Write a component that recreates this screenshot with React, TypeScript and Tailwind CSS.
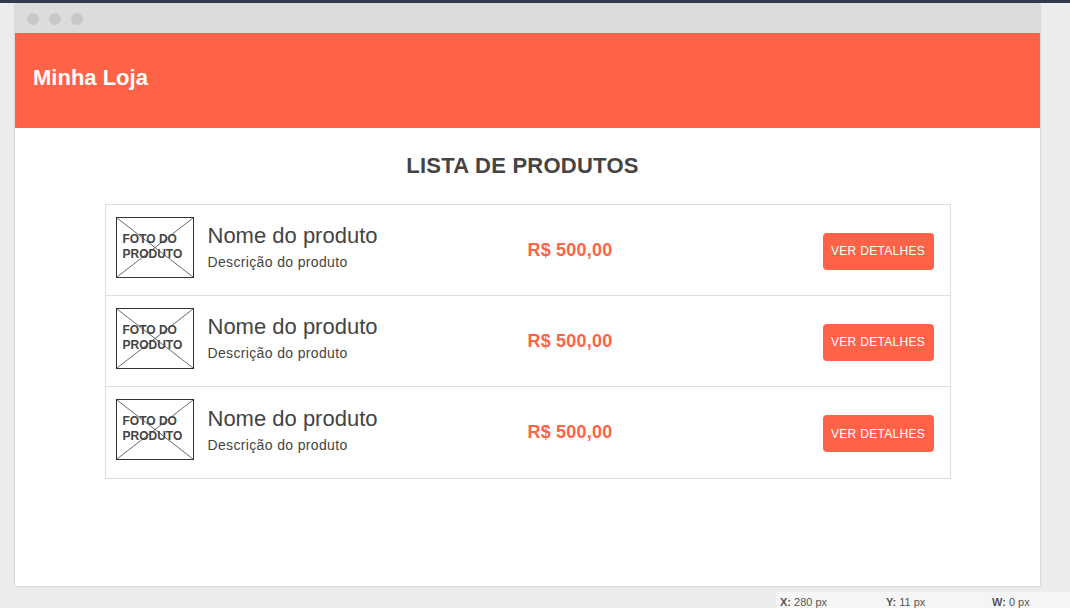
const products = [1, 2, 3].map((id) => ({
    id,
    name: 'Nome do produto',
    description: 'Descrição do produto',
    price: 'R$ 500,00',
}))

function PhotoPlaceholder() {
    return (
        <div className="relative h-[61px] w-[78px] shrink-0 border border-[#333]">
            <svg className="absolute inset-0 h-full w-full" viewBox="0 0 76 59" preserveAspectRatio="none">
                <line x1="0" y1="0" x2="76" y2="59" stroke="#444" strokeWidth="0.8" />
                <line x1="76" y1="0" x2="0" y2="59" stroke="#444" strokeWidth="0.8" />
            </svg>
            <div className="relative pl-[6px] pt-[14px] text-[12px] font-bold uppercase leading-[15px] text-[#444]">
                Foto do
                <br />
                Produto
            </div>
        </div>
    )
}

function ProductRow({ name, description, price, last }: { name: string; description: string; price: string; last: boolean }) {
    return (
        <div className={`flex h-[91px] items-center pl-[10px] pr-[16px] ${last ? '' : 'border-b border-[#ddd]'}`}>
            <div className="-mt-[6px]">
                <PhotoPlaceholder />
            </div>
            <div className="ml-[14px] w-[320px] -mt-[3px]">
                <div className="-mt-[1px] text-[22px] leading-[26px] text-[#444]">{name}</div>
                <div className="mt-[3px] text-[14px] tracking-[0.35px] text-[#444]">{description}</div>
            </div>
            <div className="text-[18px] font-bold tracking-[0.2px] text-[#ff6347]">{price}</div>
            <button className="ml-auto mt-[2px] h-[37px] w-[111px] rounded-[4px] bg-[#ff6347] text-[12px] uppercase tracking-[0.3px] text-white">
                Ver detalhes
            </button>
        </div>
    )
}

export default function App() {
    return (
        <div className="h-[608px] w-[1070px] overflow-hidden bg-[#ececec] font-['Liberation_Sans',Arial,sans-serif]">
            <div className="h-[3px] bg-[#343a49]" />
            <div className="ml-[15px] mt-[1px] flex h-[582px] w-[1025px] flex-col bg-white shadow-[0_0_2px_rgba(0,0,0,0.25)]">
                <div className="flex h-[29px] items-center gap-[10px] bg-[#dcdcdc] pl-[12px]">
                    <span className="h-[12px] w-[12px] rounded-full bg-[#c8c8c8]" />
                    <span className="h-[12px] w-[12px] rounded-full bg-[#c8c8c8]" />
                    <span className="h-[12px] w-[12px] rounded-full bg-[#c8c8c8]" />
                </div>
                <header className="flex h-[95px] items-center bg-[#ff6347] pb-[6px] pl-[18px]">
                    <h1 className="text-[22px] font-bold text-white">Minha Loja</h1>
                </header>
                <main className="flex flex-col items-center">
                    <h2 className="mr-[10px] mt-[24px] text-[22px] font-bold leading-[28px] tracking-[0.25px] text-[#444]">LISTA DE PRODUTOS</h2>
                    <div className="mt-[24px] w-[846px] border border-[#ddd]">
                        {products.map((p, i) => (
                            <ProductRow key={p.id} name={p.name} description={p.description} price={p.price} last={i === products.length - 1} />
                        ))}
                    </div>
                </main>
            </div>
            <div className="mt-[6px] flex justify-end">
                <div className="flex h-[20px] w-[294px] items-center bg-[#f5f5f5] pl-[4px] text-[11px] text-[#555]">
                    <span className="w-[106px]"><b>X:</b> 280 px</span>
                    <span className="w-[106px]"><b>Y:</b> 11 px</span>
                    <span><b>W:</b> 0 px</span>
                </div>
            </div>
        </div>
    )
}
